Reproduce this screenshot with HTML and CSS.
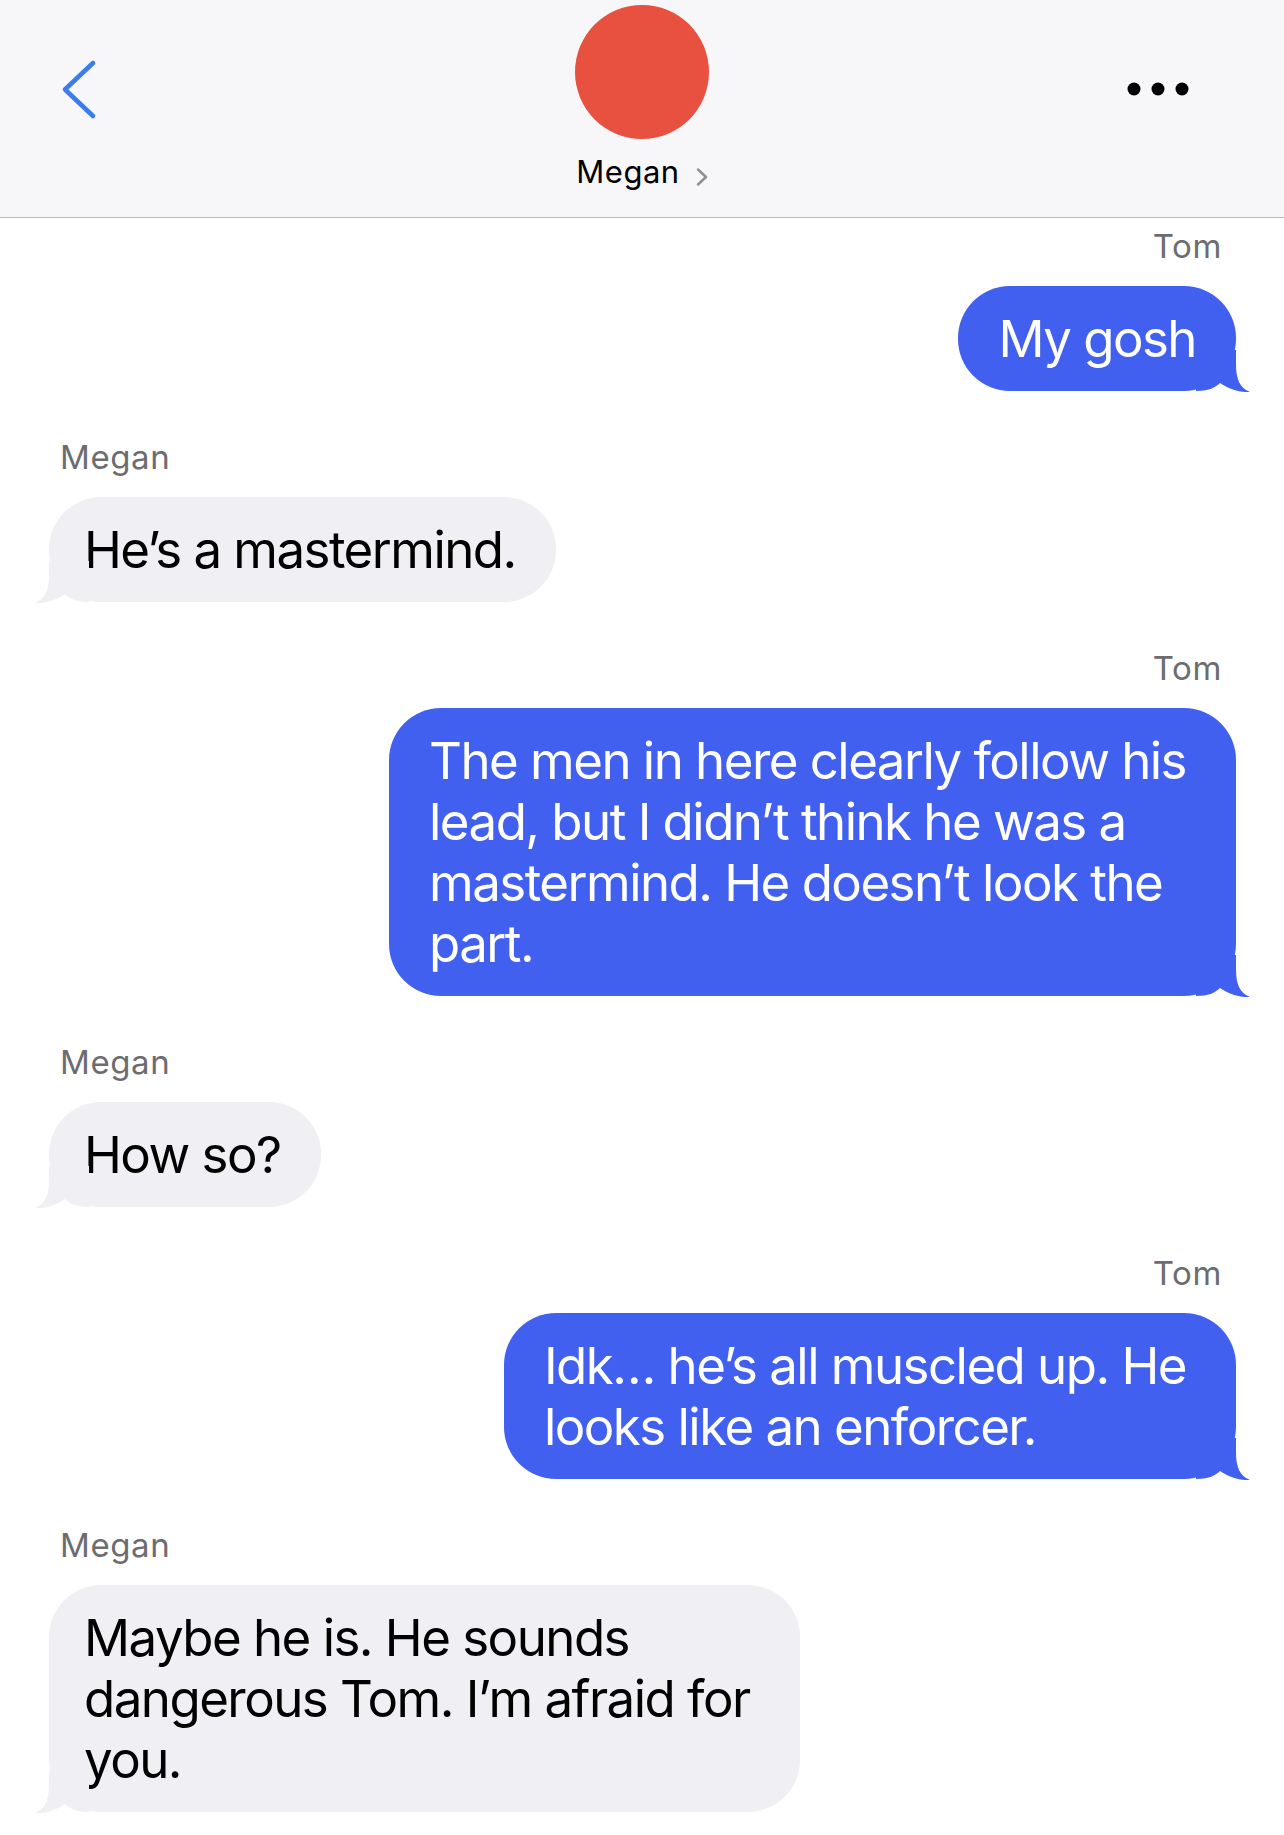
FILE: index.html
```html
<!DOCTYPE html>
<html lang="en">
<head>
<meta charset="utf-8">
<title>Megan</title>
<link rel="stylesheet" href="styles.css">
</head>
<body>
<header class="nav">
  <div class="nav-left">
    <svg class="back" width="40" height="62" viewBox="0 0 40 62"><path d="M33 5 L5 31.5 L33 58" fill="none" stroke="currentColor" stroke-width="4.6" stroke-linecap="round" stroke-linejoin="round"/></svg>
  </div>
  <div class="contact">
    <div class="avatar"></div>
    <div class="name">Megan<svg class="name-chevron" width="12" height="18" viewBox="0 0 12 18"><path d="M2 1.5 L10 9 L2 16.5" fill="none" stroke="currentColor" stroke-width="2.4" stroke-linecap="round" stroke-linejoin="round"/></svg></div>
  </div>
  <div class="nav-right">
    <svg class="more" width="62" height="16" viewBox="0 0 62 16"><circle cx="7" cy="8" r="6.5"/><circle cx="31" cy="8" r="6.5"/><circle cx="55" cy="8" r="6.5"/></svg>
  </div>
</header>

<main class="thread">
  <div class="msg sent">
    <div class="sender">Tom</div>
    <div class="bubble">My gosh<svg class="tail" width="56" height="42" viewBox="0 0 56 42"><path d="M0 0 H40 V14 C40 30 44 38 54 42 C45 42.5 34 40 24 33 C19 38 12 41 0 41 Z"/></svg></div>
  </div>

  <div class="msg received">
    <div class="sender">Megan</div>
    <div class="bubble">He’s a mastermind.<svg class="tail" width="56" height="42" viewBox="0 0 56 42"><path d="M0 0 H40 V14 C40 30 44 38 54 42 C45 42.5 34 40 24 33 C19 38 12 41 0 41 Z"/></svg></div>
  </div>

  <div class="msg sent">
    <div class="sender">Tom</div>
    <div class="bubble multi">The men in here clearly follow his<br>lead, but I didn’t think he was a<br>mastermind. He doesn’t look the<br>part.<svg class="tail" width="56" height="42" viewBox="0 0 56 42"><path d="M0 0 H40 V14 C40 30 44 38 54 42 C45 42.5 34 40 24 33 C19 38 12 41 0 41 Z"/></svg></div>
  </div>

  <div class="msg received">
    <div class="sender">Megan</div>
    <div class="bubble">How so?<svg class="tail" width="56" height="42" viewBox="0 0 56 42"><path d="M0 0 H40 V14 C40 30 44 38 54 42 C45 42.5 34 40 24 33 C19 38 12 41 0 41 Z"/></svg></div>
  </div>

  <div class="msg sent">
    <div class="sender">Tom</div>
    <div class="bubble multi">Idk… he’s all muscled up. He<br>looks like an enforcer.<svg class="tail" width="56" height="42" viewBox="0 0 56 42"><path d="M0 0 H40 V14 C40 30 44 38 54 42 C45 42.5 34 40 24 33 C19 38 12 41 0 41 Z"/></svg></div>
  </div>

  <div class="msg received">
    <div class="sender">Megan</div>
    <div class="bubble multi">Maybe he is. He sounds<br>dangerous Tom. I’m afraid for<br>you.<svg class="tail" width="56" height="42" viewBox="0 0 56 42"><path d="M0 0 H40 V14 C40 30 44 38 54 42 C45 42.5 34 40 24 33 C19 38 12 41 0 41 Z"/></svg></div>
  </div>
</main>
</body>
</html>
```

FILE: styles.css
```css
* { box-sizing: border-box; }

html, body {
  margin: 0;
  padding: 0;
  background: #ffffff;
}

body {
  width: 1284px;
  min-height: 1835px;
  overflow: hidden;
  font-family: Inter, "Liberation Sans", Arial, sans-serif;
  color: #000;
}

/* ---------- navigation header ---------- */
.nav {
  display: grid;
  grid-template-columns: 1fr auto 1fr;
  height: 218px;
  background: #f7f7f9;
  border-bottom: 1px solid #bdbdc1;
}

.nav-left {
  justify-self: start;
}

.back {
  display: block;
  margin-left: 60px;
  margin-top: 58px;
  color: #3b7ded;
}

.contact {
  display: flex;
  flex-direction: column;
  align-items: center;
}

.avatar {
  width: 134px;
  height: 134px;
  margin-top: 5px;
  border-radius: 50%;
  background: #e8503f;
}

.name {
  display: flex;
  align-items: flex-start;
  gap: 16px;
  margin-top: 15px;
  font-size: 31px;
  line-height: 36px;
  letter-spacing: 0.5px;
  color: #000;
}

.name-chevron {
  display: block;
  margin-top: 14px;
  color: #8e8e93;
}

.nav-right {
  justify-self: end;
}

.more {
  display: block;
  margin-right: 95px;
  margin-top: 81px;
  fill: #000;
}

/* ---------- thread ---------- */
.thread {
  display: flex;
  flex-direction: column;
  gap: 48px;
  padding-top: 10px;
}

.msg {
  display: flex;
  flex-direction: column;
  gap: 22px;
}

.msg.sent { align-items: flex-end; }
.msg.received { align-items: flex-start; }

.sender {
  font-size: 33px;
  line-height: 36px;
  letter-spacing: 0.6px;
  color: #6c6c71;
}

.sent .sender { margin-right: 62px; }
.received .sender { margin-left: 60px; }

.bubble {
  position: relative;
  padding: 22px 40px;
  border-radius: 52px;
  font-size: 51px;
  line-height: 61px;
  letter-spacing: -0.03em;
  white-space: nowrap;
}

.bubble.multi { padding-right: 50px; }

.sent .bubble {
  margin-right: 48px;
  background: #4160f0;
  color: #fff;
}

.received .bubble {
  margin-left: 49px;
  padding-left: 35px;
  background: #efeff4;
  color: #000;
}

.tail {
  position: absolute;
  bottom: -1px;
  display: block;
}

.sent .tail {
  right: -16px;
  fill: #4160f0;
}

.received .tail {
  left: -16px;
  transform: scaleX(-1);
  fill: #efeff4;
}
```
